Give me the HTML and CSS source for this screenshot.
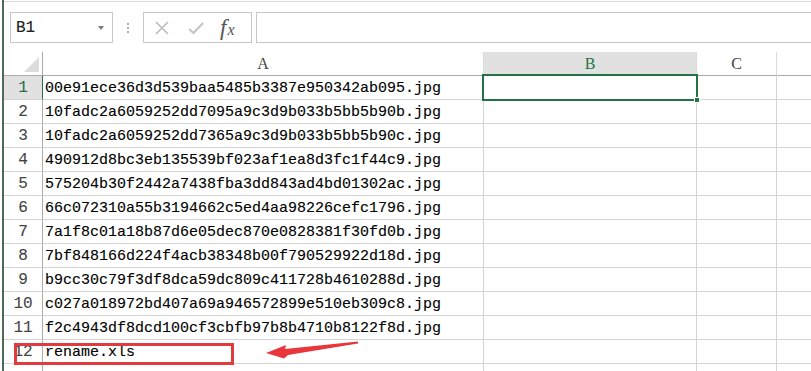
FILE: index.html
```html
<!DOCTYPE html>
<html>
<head>
<meta charset="utf-8">
<link rel="stylesheet" href="styles.css">
</head>
<body>
<div class="app">
  <div class="rule"></div>
  <div class="fbar">
    <div class="namebox"><span>B1</span><span class="dd"></span></div>
    <div class="grip"><i></i><i></i><i></i></div>
    <div class="fxbox">
      <svg class="ic" width="14" height="14" viewBox="0 0 14 14"><path d="M1 1L13 13M13 1L1 13" stroke="#bcbcbc" stroke-width="1.6" fill="none"/></svg>
      <svg class="ic" width="16" height="14" viewBox="0 0 16 14"><path d="M1 8L5.5 12L15 2" stroke="#c4c4c4" stroke-width="2.2" fill="none"/></svg>
      <span class="fx">f<span class="fxx">x</span></span>
    </div>
    <div class="finput"></div>
  </div>
  <div class="sheet">
    <div class="grid">
      <div class="c rh corner"><span class="tri"></span></div>
      <div class="c ch">A</div>
      <div class="c ch sel">B</div>
      <div class="c ch">C</div>
      <div class="c ch last"></div>

      <div class="c rh rsel">1</div><div class="c">00e91ece36d3d539baa5485b3387e950342ab095.jpg</div><div class="c cur"><span class="selbox"><span class="handle"></span></span></div><div class="c"></div><div class="c last"></div>
      <div class="c rh">2</div><div class="c">10fadc2a6059252dd7095a9c3d9b033b5bb5b90b.jpg</div><div class="c"></div><div class="c"></div><div class="c last"></div>
      <div class="c rh">3</div><div class="c">10fadc2a6059252dd7365a9c3d9b033b5bb5b90c.jpg</div><div class="c"></div><div class="c"></div><div class="c last"></div>
      <div class="c rh">4</div><div class="c">490912d8bc3eb135539bf023af1ea8d3fc1f44c9.jpg</div><div class="c"></div><div class="c"></div><div class="c last"></div>
      <div class="c rh">5</div><div class="c">575204b30f2442a7438fba3dd843ad4bd01302ac.jpg</div><div class="c"></div><div class="c"></div><div class="c last"></div>
      <div class="c rh">6</div><div class="c">66c072310a55b3194662c5ed4aa98226cefc1796.jpg</div><div class="c"></div><div class="c"></div><div class="c last"></div>
      <div class="c rh">7</div><div class="c">7a1f8c01a18b87d6e05dec870e0828381f30fd0b.jpg</div><div class="c"></div><div class="c"></div><div class="c last"></div>
      <div class="c rh">8</div><div class="c">7bf848166d224f4acb38348b00f790529922d18d.jpg</div><div class="c"></div><div class="c"></div><div class="c last"></div>
      <div class="c rh">9</div><div class="c">b9cc30c79f3df8dca59dc809c411728b4610288d.jpg</div><div class="c"></div><div class="c"></div><div class="c last"></div>
      <div class="c rh">10</div><div class="c">c027a018972bd407a69a946572899e510eb309c8.jpg</div><div class="c"></div><div class="c"></div><div class="c last"></div>
      <div class="c rh">11</div><div class="c">f2c4943df8dcd100cf3cbfb97b8b4710b8122f8d.jpg</div><div class="c"></div><div class="c"></div><div class="c last"></div>
      <div class="c rh">12</div><div class="c">rename.xls</div><div class="c"></div><div class="c"></div><div class="c last"></div>
      <div class="c rh"></div><div class="c"></div><div class="c"></div><div class="c"></div><div class="c last"></div>
    </div>
    <div class="redbox"></div>
    <svg class="arrow" width="100" height="24" viewBox="262 338 100 24"><polygon points="266,353 286,345 285,349 358,341.5 358,343.5 288,355 284,358.5" fill="#e8363c"/></svg>
  </div>
</div>
</body>
</html>
```
FILE: styles.css
```css
* { box-sizing: border-box; }
html, body { margin: 0; padding: 0; background: #fff; overflow: hidden; }
body { width: 811px; height: 371px; font-family: "Liberation Mono", "Noto Sans CJK SC", monospace; }
.app {
  margin-left: 2px;
  border-left: 2px solid #4f6a5b;
  height: 371px;
  padding-top: 1px;
}
.rule { height: 1px; background: #d9d9d9; }
.fbar {
  display: flex;
  align-items: center;
  margin-top: 10px;
  height: 31px;
}
.namebox {
  margin-left: 6px;
  width: 103px;
  height: 31px;
  border: 1px solid #c6c6c6;
  display: flex;
  align-items: center;
  justify-content: space-between;
  padding: 1px 8px 0 5px;
  font-size: 16px;
  color: #222;
  -webkit-text-stroke: 0.15px #222;
}
.dd {
  width: 0; height: 0;
  border-left: 3.5px solid transparent;
  border-right: 3.5px solid transparent;
  border-top: 4px solid #7a7a7a;
}
.grip {
  width: 30px;
  display: flex;
  flex-direction: column;
  align-items: center;
  gap: 2px;
}
.grip i { display: block; width: 2px; height: 2px; background: #b0b0b0; }
.fxbox {
  width: 109px;
  height: 31px;
  border: 1px solid #c6c6c6;
  display: flex;
  align-items: center;
  padding-left: 11px;
}
.fxbox .ic { margin-right: 19px; }
.fxbox .ic + .ic { margin-right: 16px; }
.fx {
  font-family: "Liberation Serif", serif;
  font-style: italic;
  font-size: 23px;
  color: #555;
  line-height: 1;
}
.fxx { font-size: 16px; margin-left: 1px; }
.finput {
  margin-left: 4px;
  flex: 1;
  height: 31px;
  border: 1px solid #c6c6c6;
  border-right: none;
}
.sheet { position: relative; margin-top: 9px; }
.grid {
  display: grid;
  grid-template-columns: 39px 441px 213px 80px 1fr;
  grid-auto-rows: 24px;
}
.c {
  border-right: 1px solid #d4d4d4;
  border-bottom: 1px solid #d4d4d4;
  font-size: 15px;
  line-height: 23px;
  padding-left: 2px;
  padding-top: 1px;
  color: #000;
  white-space: nowrap;
  overflow: visible;
  -webkit-text-stroke: 0.12px #000;
}
.c.last { border-right: none; }
.ch, .rh {
  color: #444;
  text-align: center;
  padding-left: 0;
  -webkit-text-stroke: 0;
}
.ch { font-family: "Liberation Serif", serif; font-size: 16px; padding-top: 0; border-right-color: #dadada; border-bottom-color: #ababab; }
.rh { border-right-color: #ababab; border-bottom-color: #d4d4d4; font-size: 16px; -webkit-text-stroke: 0.1px #444; }
.ch.sel { background: #e1e1e1; color: #217346; border-bottom: 1px solid #217346; }
.rh.rsel { background: #e1e1e1; color: #217346; border-right-color: #217346; -webkit-text-stroke: 0.1px #217346; }
.corner { position: relative; border-bottom-color: #ababab; }
.tri {
  position: absolute;
  right: 3px; bottom: 3px;
  width: 0; height: 0;
  border-left: 15px solid transparent;
  border-bottom: 15px solid #dcdcdc;
}
.cur { position: relative; }
.selbox {
  position: absolute;
  left: -2px; top: -2px; right: -2px; bottom: -2px;
  border: 2px solid #217346;
}
.handle {
  position: absolute;
  right: -4px; bottom: -4px;
  width: 6px; height: 6px;
  background: #217346;
  border: 1px solid #fff;
}
.redbox {
  position: absolute;
  left: 10px; top: 291px;
  width: 220px; height: 22px;
  border: 3px solid #e23b3f;
}
.arrow { position: absolute; left: 258px; top: 286px; }
```
